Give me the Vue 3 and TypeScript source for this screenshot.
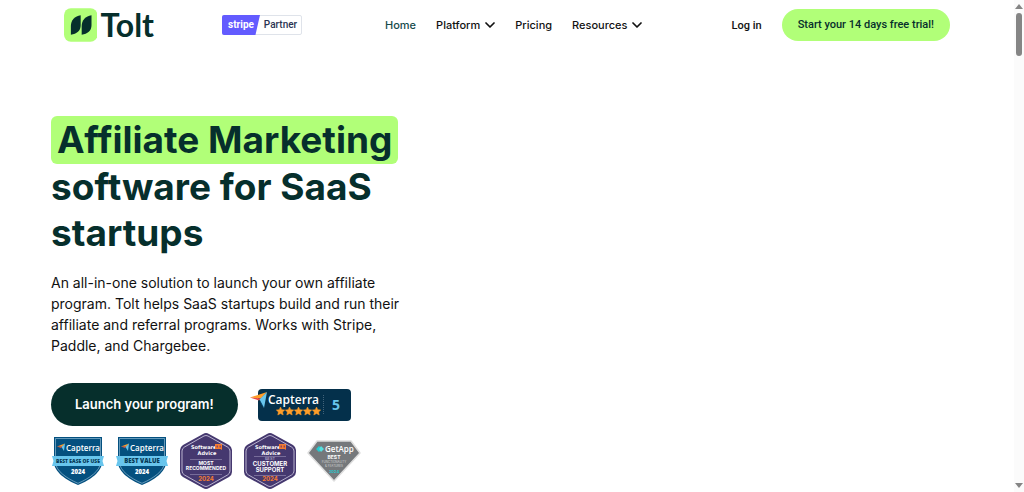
<script setup lang="ts">
interface NavItem {
  label: string
  href: string
  active?: boolean
  menu?: boolean
}

const navItems: NavItem[] = [
  { label: 'Home', href: '#home', active: true },
  { label: 'Platform', href: '#platform', menu: true },
  { label: 'Pricing', href: '#pricing' },
  { label: 'Resources', href: '#resources', menu: true },
]

const shields = [
  { title: 'BEST EASE OF USE', size: 5 },
  { title: 'BEST VALUE', size: 6 },
]

const hexagons = [
  { small: '', lines: ['MOST', 'RECOMMENDED'], size: 5, top: 33, rules: [27, 42] },
  { small: 'BEST', lines: ['CUSTOMER', 'SUPPORT'], size: 6, top: 34, rules: [24, 43] },
]

const stars = [0, 1, 2, 3, 4]
</script>

<template>
  <div class="page">
    <div class="content">
      <header class="header">
        <a class="logo" href="#home" aria-label="Tolt">
          <svg width="34" height="34" viewBox="0 0 34 34" aria-hidden="true">
            <rect width="34" height="34" rx="7" fill="#b1ff78" />
            <path d="M7 27V18C7 12 11 8 17 7V17C17 23 13 26 7 27Z" fill="#062f2c" />
            <path d="M18 27V18C18 12 22 8 28 7V17C28 23 24 26 18 27Z" fill="#062f2c" />
          </svg>
          <span class="wordmark">Tolt</span>
        </a>
        <a class="partner" href="#stripe">
          <span class="partner-stripe">stripe</span>
          <span class="partner-label">Partner</span>
        </a>
        <nav class="nav">
          <a
            v-for="item in navItems"
            :key="item.label"
            class="nav-link"
            :class="{ active: item.active }"
            :href="item.href"
          >
            {{ item.label }}
            <svg v-if="item.menu" width="10" height="6" viewBox="0 0 10 6" aria-hidden="true">
              <path d="M1 1L5 5L9 1" fill="none" stroke="#111" stroke-width="1.7" stroke-linecap="round" stroke-linejoin="round" />
            </svg>
          </a>
        </nav>
        <div class="account">
          <a class="login" href="#login">Log in</a>
          <a class="trial" href="#trial">Start your 14 days free trial!</a>
        </div>
      </header>

      <main class="hero">
        <h1 class="headline">
          <mark class="highlight">Affiliate Marketing</mark>
          <span class="headline-rest">software for SaaS startups</span>
        </h1>
        <p class="lead">
          An all-in-one solution to launch your own affiliate program. Tolt helps SaaS startups build
          and run their affiliate and referral programs. Works with Stripe, Paddle, and Chargebee.
        </p>
        <div class="actions">
          <a class="launch" href="#launch">Launch your program!</a>
          <svg class="rating" width="102" height="34" viewBox="0 0 102 34" role="img" aria-label="Capterra rating 5">
            <rect x="8" y="1" width="93" height="32" rx="4" fill="#04304b" />
            <path d="M0 9.500L17 4L11 10.500Z" fill="#ff9d28" />
            <path d="M0 9.500L11 10.500L9 12.500Z" fill="#e54747" />
            <path d="M17 4L14 20L9.500 11.500Z" fill="#68c5ed" />
            <path d="M9.500 11.500L14 20L11 16Z" fill="#044d80" />
            <text x="18" y="16" class="rating-name">Capterra</text>
            <path
              v-for="s in stars"
              :key="s"
              :transform="`translate(${26 + s * 9} 19)`"
              d="M4.500 0L5.800 2.700L8.700 3L6.600 5L7.200 8L4.500 6.600L1.800 8L2.400 5L0.300 3L3.200 2.700Z"
              fill="#ff9d28"
              stroke="#ff9d28"
              stroke-width="0.500"
            />
            <path d="M73.500 7V27" stroke="#41637a" stroke-dasharray="1 1" />
            <text x="82" y="22" class="rating-score">5</text>
          </svg>
        </div>

        <div class="badges">
          <svg v-for="badge in shields" :key="badge.title" width="54" height="50" viewBox="0 0 54 50" role="img" :aria-label="badge.title">
            <path d="M3 1H51V26C51 36 39 44 27 49C15 44 3 36 3 26Z" fill="#04507f" />
            <path d="M4.500 2.500H49.500V26C49.500 35 38 42.500 27 47.300C16 42.500 4.500 35 4.500 26Z" fill="none" stroke="#a7cde2" stroke-width="0.600" />
            <path d="M6 10.500L14 7.500L11 10.800Z" fill="#ff9d28" />
            <path d="M6 10.500L11 10.800L10 12Z" fill="#e54747" />
            <path d="M14 7.500L13 15L10.500 11Z" fill="#68c5ed" />
            <text x="15" y="15" class="shield-name">Capterra</text>
            <path d="M1 20H53L51.500 25L53 30H1L2.500 25Z" fill="#68c5ed" />
            <text x="27" y="27" text-anchor="middle" class="shield-title" :font-size="badge.size">{{ badge.title }}</text>
            <text x="27" y="38" text-anchor="middle" class="shield-year">2024</text>
          </svg>

          <svg v-for="badge in hexagons" :key="badge.lines[0]" width="54" height="58" viewBox="0 0 54 58" role="img" :aria-label="badge.lines.join(' ')">
            <path d="M24 2Q27 0 30 2L50 13Q53 15 53 18V40Q53 43 50 45L30 56Q27 58 24 56L4 45Q1 43 1 40V18Q1 15 4 13Z" fill="#45386f" />
            <path d="M25 4Q27 3 29 4L48.500 15Q51 16.500 51 19V39Q51 41.500 48.500 43L29 54Q27 55 25 54L5.500 43Q3 41.500 3 39V19Q3 16.500 5.500 15Z" fill="none" stroke="#d8d3e8" stroke-width="0.800" />
            <text x="12" y="17" class="hex-name">Software</text>
            <text x="28" y="23" text-anchor="middle" class="hex-name">Advice</text>
            <path d="M36 12H43V18L41.500 17H36Z" fill="#f47b30" />
            <path d="M37.500 13.500H39V15.500H37.500ZM40.500 13.500H42V15.500H40.500Z" fill="#8d4762" />
            <path v-for="rule in badge.rules" :key="rule" :d="`M11 ${rule}.500H43`" stroke="#8c83ac" stroke-width="0.700" />
            <text v-if="badge.small" x="27" y="28" text-anchor="middle" class="hex-small">{{ badge.small }}</text>
            <text
              v-for="(line, i) in badge.lines"
              :key="line"
              x="27"
              :y="badge.top + i * badge.size"
              text-anchor="middle"
              class="hex-line"
              :font-size="badge.size"
            >{{ line }}</text>
            <text x="27" y="49" text-anchor="middle" class="hex-year">2024</text>
          </svg>

          <svg width="54" height="42" viewBox="0 0 54 42" role="img" aria-label="GetApp best functionality and features">
            <path d="M10 1H44L53 13L27 41L1 13Z" fill="#75787b" stroke="#dedede" stroke-width="1.500" stroke-linejoin="round" />
            <path d="M9 9L12 6L14 8L12 9L14 10L12 12Z" fill="#23cbd0" />
            <path d="M12 9L14 6L17 9L14 12Z" fill="#55e0df" />
            <text x="18" y="12" class="getapp-name">GetApp</text>
            <text x="27" y="19" text-anchor="middle" class="getapp-best">BEST</text>
            <text x="27" y="23" text-anchor="middle" class="getapp-line">FUNCTIONALITY</text>
            <text x="27" y="27" text-anchor="middle" class="getapp-line">&amp; FEATURES</text>
            <text x="27" y="33" text-anchor="middle" class="getapp-year">2024</text>
          </svg>
        </div>
      </main>
    </div>

    <div class="rail" aria-hidden="true">
      <svg width="8" height="5" viewBox="0 0 8 5"><path d="M4 0L8 5H0Z" fill="#858585" /></svg>
      <div class="thumb"></div>
      <svg class="rail-down" width="8" height="5" viewBox="0 0 8 5"><path d="M0 0H8L4 5Z" fill="#858585" /></svg>
    </div>
  </div>
</template>

<style>
body {
  margin: 0;
  background: #fff;
}
</style>

<style scoped>
.page {
  display: flex;
  min-height: 100vh;
  font-family: Inter, "Liberation Sans", sans-serif;
  color: #111;
}

a {
  color: inherit;
  text-decoration: none;
}

.content {
  flex: 1;
  min-width: 0;
}

.header {
  display: flex;
  align-items: center;
  height: 50px;
  padding: 0 64px;
}

.logo {
  display: flex;
  align-items: center;
  gap: 3px;
  width: 90px;
}

.wordmark {
  color: #062f2c;
  font-family: Lato, sans-serif;
  font-size: 32px;
  font-weight: 700;
  line-height: 34px;
}

.partner {
  display: flex;
  width: 80px;
  height: 20px;
  box-sizing: border-box;
  margin-left: 68px;
  border: 1px solid #dfe3ea;
  border-radius: 2px;
  font-size: 10px;
  line-height: 18px;
}

.partner-stripe {
  width: 38px;
  margin: -1px 0 -1px -1px;
  background: #635bff;
  clip-path: polygon(0 0, 100% 0, 88% 100%, 0 100%);
  border-radius: 2px 0 0 2px;
  color: #fff;
  font-family: Roboto, sans-serif;
  font-weight: 700;
  line-height: 20px;
  text-align: center;
}

.partner-label {
  flex: 1;
  color: #2a3352;
  font-family: Roboto, sans-serif;
  font-weight: 500;
  text-align: center;
}

.nav {
  display: flex;
  gap: 20px;
  margin-left: 83px;
}

.nav-link {
  display: flex;
  align-items: center;
  gap: 5px;
  font-size: 11px;
  font-weight: 500;
  line-height: 16px;
}

.nav-link.active {
  color: #164b4b;
}

.account {
  display: flex;
  align-items: center;
  gap: 20px;
  margin-left: auto;
  font-family: Roboto, sans-serif;
  font-size: 11px;
  font-weight: 500;
  white-space: nowrap;
}

.trial {
  padding: 0 16px;
  border-radius: 16px;
  background: #b1ff78;
  color: #062f2c;
  line-height: 32px;
}

.hero {
  max-width: 365px;
  padding: 66px 0 0 51px;
}

.headline {
  display: flex;
  flex-direction: column;
  align-items: flex-start;
  margin: 0;
  color: #062f2c;
  font-size: 37px;
  font-weight: 700;
  line-height: 46px;
}

.highlight {
  padding: 1px 6px;
  border-radius: 6px;
  background: #b1ff78;
  color: inherit;
  white-space: nowrap;
}

.lead {
  margin: 16px 0 0;
  font-size: 14px;
  line-height: 21px;
}

.actions {
  display: flex;
  align-items: center;
  gap: 12px;
  margin-top: 27px;
}

.launch {
  padding: 0 24px;
  border-radius: 22px;
  background: #062f2c;
  color: #fff;
  font-size: 13px;
  font-weight: 600;
  line-height: 43px;
  white-space: nowrap;
}

.badges {
  display: flex;
  align-items: center;
  gap: 10px;
  margin-top: 6px;
}

.badges svg {
  flex: none;
}

.rating {
  flex: none;
}

.rating-name {
  fill: #fff;
  font: 600 12px "Open Sans", sans-serif;
}

.rating-score {
  fill: #68c5ed;
  font: 700 14px "Open Sans", sans-serif;
}

.shield-name {
  fill: #fff;
  font: 600 8px "Open Sans", sans-serif;
}

.shield-title {
  fill: #063955;
  font-family: "Open Sans", sans-serif;
  font-weight: 800;
}

.shield-year {
  fill: #fff;
  font: 800 6px "Open Sans", sans-serif;
}

.hex-name {
  fill: #fff;
  font: 700 5px "DejaVu Sans", sans-serif;
}

.hex-small {
  fill: #c9c2dd;
  font: 400 4px Inter, sans-serif;
}

.hex-line {
  fill: #fff;
  font-family: Inter, sans-serif;
  font-weight: 700;
}

.hex-year {
  fill: #f47b30;
  font: 700 6px Inter, sans-serif;
}

.getapp-name {
  fill: #fff;
  font: 600 8px "Open Sans", sans-serif;
}

.getapp-best {
  fill: #fff;
  font: 700 5px Inter, sans-serif;
}

.getapp-line {
  fill: #d0d2d3;
  font: 400 3px Inter, sans-serif;
}

.getapp-year {
  fill: #23cbd0;
  font: 600 4px Inter, sans-serif;
}

.rail {
  position: sticky;
  top: 0;
  display: flex;
  flex-direction: column;
  align-items: center;
  gap: 4px;
  box-sizing: border-box;
  width: 10px;
  height: 100vh;
  padding: 4px 0;
  background: #fbfbfb;
}

.thumb {
  width: 6px;
  height: 43px;
  border-radius: 3px;
  background: #858585;
}

.rail-down {
  margin-top: auto;
}
</style>
